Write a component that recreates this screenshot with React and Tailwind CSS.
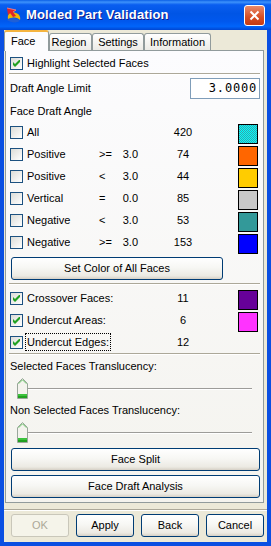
import React from "react";

function Check({ checked }) {
  return (
    <span className="w-[13px] h-[13px] shrink-0 border border-[#1c5180] bg-[linear-gradient(135deg,#dcdcd7,#ffffff)] flex items-center justify-center">
      {checked && (
        <svg width="7" height="7" viewBox="0 0 7 7">
          <polygon points="0,2 2,4 6,0 7,0 7,2 2,7 0,5" fill="#21a121" />
        </svg>
      )}
    </span>
  );
}

function Btn({ children, className = "", disabled }) {
  return (
    <div
      className={
        "h-[23px] shrink-0 flex items-center justify-center rounded-[3px] border " +
        (disabled
          ? "border-[#c9c7ba] text-[#aca899] bg-[#f5f4ea] "
          : "border-[#003c74] bg-[linear-gradient(180deg,#ffffff_0%,#f7f7f4_45%,#eceae3_85%,#d6d0c5_100%)] ") +
        className
      }
    >
      {children}
    </div>
  );
}

function Sep({ className = "" }) {
  return <div className={"h-[2px] shrink-0 border-t border-t-[#aca899] border-b border-b-white " + className} />;
}

function Thumb() {
  return (
    <svg width="11" height="21" viewBox="0 0 11 21" className="absolute left-[7px] top-[5px]">
      <polygon points="0.5,5.5 5.5,0.5 10.5,5.5 10.5,20.5 0.5,20.5" fill="#f4f3ee" stroke="#9aa69a" />
      <polyline points="1.5,5.8 5.5,1.8 9.5,5.8" fill="none" stroke="#6cc46c" />
      <rect x="1" y="16" width="9" height="2" fill="#3dc23d" />
      <rect x="1" y="18" width="9" height="2" fill="#21a121" />
    </svg>
  );
}

function Slider() {
  return (
    <div className="relative h-[26px] shrink-0">
      <div className="absolute left-[18px] w-[224px] top-[15px] h-[2px] border-t border-t-[#9d9c99] border-b border-b-white" />
      <Thumb />
    </div>
  );
}

const rows = [
  { label: "All", op: "", val: "", count: "420", sw: "bg-[#00ffff] bg-[image:conic-gradient(#00ffff_25%,#3aa0a8_0_50%,#00ffff_0_75%,#3aa0a8_0)] bg-[length:2px_2px]" },
  { label: "Positive", op: ">=", val: "3.0", count: "74", sw: "bg-[#ff6600]" },
  { label: "Positive", op: "<", val: "3.0", count: "44", sw: "bg-[#ffcc00]" },
  { label: "Vertical", op: "=", val: "0.0", count: "85", sw: "bg-[#c8c8c8]" },
  { label: "Negative", op: "<", val: "3.0", count: "53", sw: "bg-[#339999]" },
  { label: "Negative", op: ">=", val: "3.0", count: "153", sw: "bg-[#0000ff]" },
];

const extra = [
  { label: "Crossover Faces:", count: "11", sw: "bg-[#660099]" },
  { label: "Undercut Areas:", count: "6", sw: "bg-[#ff33ff]" },
  { label: "Undercut Edges:", count: "12", sw: null, focus: true },
];

export default function App() {
  return (
    <div className="w-[271px] h-[546px] bg-[#0a4fe2] flex flex-col overflow-hidden font-['Liberation_Sans',Arial,sans-serif] text-[11px] text-black leading-[13px]">
      {/* Title bar */}
      <div className="h-[30px] shrink-0 flex items-center pl-[5px] pr-[6px] bg-[linear-gradient(180deg,#0b5fe6_0%,#3d92fb_7%,#0a5ef0_16%,#0055e5_45%,#0058ee_72%,#0064fa_88%,#0046d2_100%)]">
        <svg width="18" height="18" viewBox="0 0 18 18" className="shrink-0">
          <path d="M3 13 C2 8 6 5 11 7 C14 8 16 11 15 14 C13 12 10 11 7 12 C5 13 4 14 3 13Z" fill="#f2b705" />
          <path d="M2 14 C5 11 10 11 15 15 C12 17 6 17 2 14Z" fill="#1f5fd6" />
          <path d="M2 2 L11 4 L8 6 L11 10 L8 11 L5 7 L3 9Z" fill="#e0242a" />
          <path d="M2 2 L11 4 L8 6" fill="none" stroke="#ff8a8a" strokeWidth="0.8" />
        </svg>
        <span className="ml-[3px] text-white font-bold text-[13px] tracking-[0.15px] leading-[16px] [text-shadow:1px_1px_0_#0f1a8a] font-['Liberation_Sans',Arial,sans-serif]">
          Molded Part Validation
        </span>
        <div className="ml-auto w-[21px] h-[21px] rounded-[3px] border border-white bg-[linear-gradient(180deg,#e98a6a,#d64d22_60%,#c43a12)] flex items-center justify-center">
          <svg width="11" height="11" viewBox="0 0 11 11">
            <path d="M1.5 1.5 L9.5 9.5 M9.5 1.5 L1.5 9.5" stroke="#fff" strokeWidth="2" />
          </svg>
        </div>
      </div>

      {/* Client area */}
      <div className="mx-[4px] h-[512px] shrink-0 bg-[#ece9d8] flex flex-col">
        {/* Tabs */}
        <div className="h-[20px] shrink-0 flex items-end relative z-10">
          <div className="w-[45px] h-[21px] mb-[-1px] bg-[#fcfcfe] border-x border-x-[#919b9c] border-t-2 border-t-[#f5b43f] rounded-t-[3px] flex items-center pl-[6px] pb-[1px]">
            Face
          </div>
          <div className="w-[43px] h-[17px] bg-[linear-gradient(180deg,#ffffff,#ecebe6)] border border-[#919b9c] border-b-0 rounded-t-[3px] flex items-center justify-center pr-[3px]">
            Region
          </div>
          <div className="w-[52px] h-[17px] bg-[linear-gradient(180deg,#ffffff,#ecebe6)] border border-[#919b9c] border-b-0 rounded-t-[3px] flex items-center justify-center">
            Settings
          </div>
          <div className="w-[67px] h-[17px] bg-[linear-gradient(180deg,#ffffff,#ecebe6)] border border-[#919b9c] border-b-0 rounded-t-[3px] flex items-center justify-center">
            Information
          </div>
        </div>

        {/* Panel */}
        <div className="ml-[1px] w-[259px] h-[453px] shrink-0 border border-[#919b9c] bg-[linear-gradient(180deg,#fcfcfe,#f4f3ee)] flex flex-col pl-[4px] pr-[3px]">
          <div className="mt-[3px] h-[19px] flex items-center shrink-0">
            <Check checked />
            <span className="ml-[4px]">Highlight Selected Faces</span>
          </div>
          <Sep className="ml-[-1px]" />
          <div className="mt-[3px] h-[21px] flex items-center shrink-0">
            <span>Draft Angle Limit</span>
            <div className="ml-auto w-[70px] h-[21px] border border-[#7f9db9] bg-white flex items-center justify-end pr-[2px] font-['DejaVu_Sans_Mono',monospace] text-[12px] tracking-[0.8px]">
              3.0000
            </div>
          </div>
          <div className="mt-[5px] h-[14px] flex items-center shrink-0">Face Draft Angle</div>
          <div className="mt-[6px] flex flex-col shrink-0">
            {rows.map((r, i) => (
              <div key={i} className="h-[22px] flex items-start">
                <span className="mt-[2px]">
                  <Check />
                </span>
                <span className="ml-[4px] mt-[2px] w-[72px]">{r.label}</span>
                <span className="mt-[2px] w-[22px]">{r.op}</span>
                <span className="mt-[2px] w-[17px] text-right">{r.val}</span>
                <span className="mt-[2px] ml-[25px] w-[40px] text-center">{r.count}</span>
                <span className={"ml-auto mr-[2px] w-[20px] h-[20px] border border-black " + r.sw} />
              </div>
            ))}
          </div>
          <Btn className="mt-[1px] ml-[1px] w-[212px]">Set Color of All Faces</Btn>
          <Sep className="mt-[3px] ml-[-1px]" />
          <div className="mt-[5px] flex flex-col shrink-0">
            {extra.map((r, i) => (
              <div key={i} className={(r.sw ? "h-[22px]" : "h-[19px]") + " flex items-start"}>
                <span className="mt-[2px]">
                  <Check checked />
                </span>
                <span className="ml-[3px] w-[112px]">
                  <span className={"inline-block px-[1px] pt-[2px] pb-[1px] " + (r.focus ? "outline outline-1 outline-dotted outline-black" : "")}>
                    {r.label}
                  </span>
                </span>
                <span className="mt-[2px] ml-[25px] w-[40px] text-center">{r.count}</span>
                {r.sw && <span className={"ml-auto mr-[2px] w-[20px] h-[20px] border border-black " + r.sw} />}
              </div>
            ))}
          </div>
          <Sep className="ml-[-1px]" />
          <div className="mt-[4px] h-[14px] flex items-center shrink-0">Selected Faces Translucency:</div>
          <Slider />
          <div className="mt-[4px] h-[14px] flex items-center shrink-0">Non Selected Faces Translucency:</div>
          <Slider />
          <Btn className="mt-[5px] ml-[1px] w-[249px]">Face Split</Btn>
          <Btn className="mt-[4px] ml-[1px] w-[249px]">Face Draft Analysis</Btn>
        </div>

        <Sep className="mt-[6px]" />
        <div className="mt-[3px] flex gap-[7px] pl-[7px]">
          <Btn disabled className="w-[58px]">OK</Btn>
          <Btn className="w-[58px]">Apply</Btn>
          <Btn className="w-[58px]">Back</Btn>
          <Btn className="w-[58px]">Cancel</Btn>
        </div>
      </div>
    </div>
  );
}
